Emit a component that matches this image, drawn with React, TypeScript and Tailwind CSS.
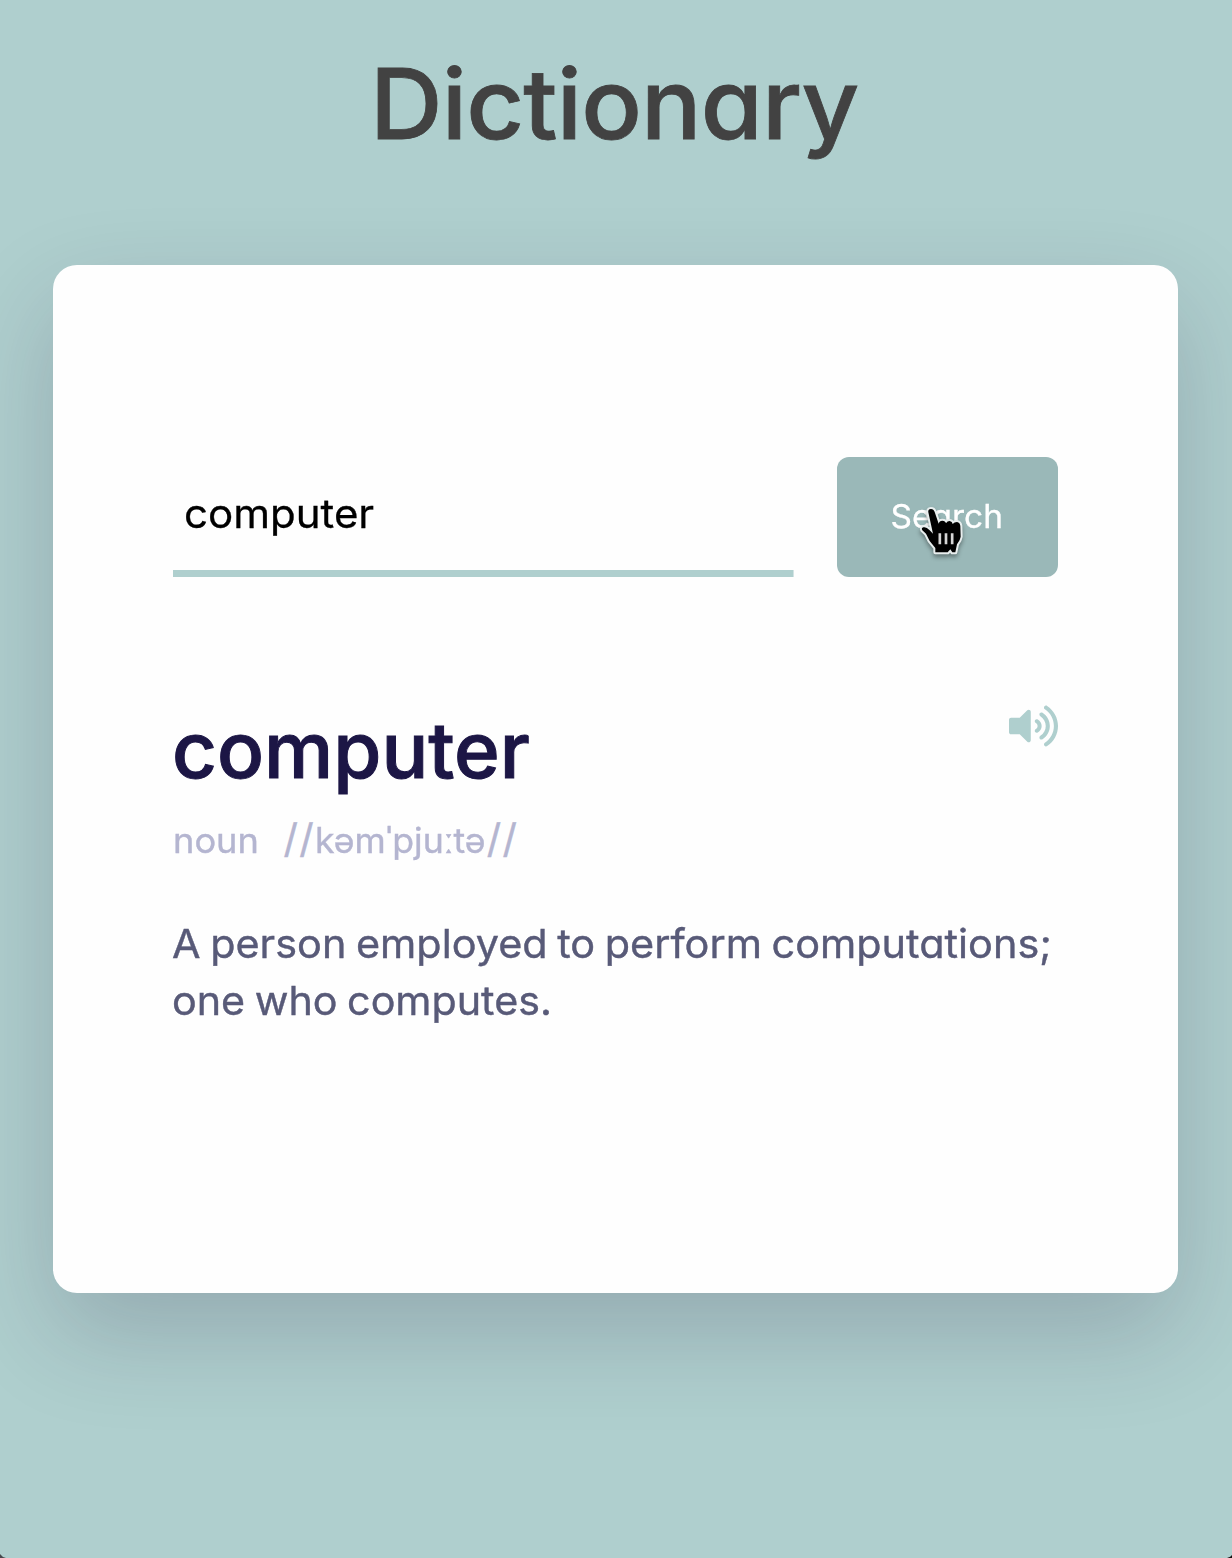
import { FaVolumeUp } from "react-icons/fa";

function HandCursor() {
  return (
    <svg
      className="pointer-events-none absolute left-[53px] top-[33px] h-[80px] w-[120px] drop-shadow-[0_3px_2px_rgba(0,0,0,0.35)]"
      viewBox="0 0 360 240"
    >
      <path
        d="M115 67Q113 58 123 57Q131 57 134 66L146 101Q148 92 157 92Q166 92 168 100Q172 93 179 93Q187 94 188 102Q193 96 201 96Q210 98 211 108L212 140Q211 150 201 163L196 187H187L181 178L173 187H136V174L119 153L108 131L97 121Q93 114 100 112Q108 109 119 121L129 131Z"
        fill="#000"
        stroke="#e8eeee"
        strokeWidth="12"
        strokeLinejoin="round"
        paintOrder="stroke"
      />
      <path d="M149.500 130V163M168 130V163M186.500 130V163" stroke="#d5d5d5" strokeWidth="8" />
    </svg>
  );
}

export default function App() {
  return (
    <main className="relative flex h-[1558px] w-full flex-col items-center overflow-hidden bg-[#afcfce] font-['Inter',sans-serif] [font-feature-settings:'cv11']">
      <h1 className="mr-[4px] mt-[32px] h-[144px] scale-x-[1.025] whitespace-nowrap text-[98px] font-medium leading-[144px] tracking-[-0.8px] text-[#424242] [-webkit-text-stroke:0.8px_#424242]">
        Dictionary
      </h1>
      <section className="mr-[2px] mt-[89px] h-[1028px] w-[1125px] rounded-[24px] bg-[#fefefe] px-[120px] pt-[192px] shadow-[0_40px_100px_rgba(38,25,58,0.2)]">
        <div className="flex justify-between">
          <div className="w-[620px]">
            <input
              className="h-[120px] w-[590.5px] origin-left scale-x-[1.05] border-b-[7px] border-[#afcfce] bg-transparent px-[10.5px] pb-px text-[40px] text-black outline-none [-webkit-text-stroke:0.3px_#000]"
              defaultValue="computer"
            />
          </div>
          <button className="relative h-[120px] w-[221px] rounded-[12px] bg-[#9ab8b8] text-[32px] text-white">
            <span className="inline-block scale-x-[1.045] [-webkit-text-stroke:0.3px_#fff]">Search</span>
            <HandCursor />
          </button>
        </div>
        <div className="mt-[124px] flex items-start justify-between">
          <h2 className="-ml-px h-[98px] origin-left scale-x-[1.012] text-[77px] font-medium leading-[98px] text-[#1c1645] [-webkit-text-stroke:1px_#1c1645]">
            computer
          </h2>
          <FaVolumeUp className="mt-[3px] h-[44px] w-[49px] text-[#afcfce]" />
        </div>
        <div className="mt-[16px] flex h-[50px] gap-[28px] text-[35px] leading-[50px] text-[#b4b5d0] [-webkit-text-stroke:0.4px_#b4b5d0]">
          <span className="inline-block origin-left scale-x-[1.035]">noun</span>
          <span className="flex whitespace-nowrap">
            <span className="-mt-px text-[40px] tracking-[1.2px]">//</span>
            <span className="w-[172px]">
              <span className="inline-block origin-left scale-x-[1.02]">kəmˈpjuːtə</span>
            </span>
            <span className="-mt-px text-[40px] tracking-[1.2px]">//</span>
          </span>
        </div>
        <p className="-ml-px mt-[50px] whitespace-nowrap text-[40px] leading-[57px] text-[#585a78] [-webkit-text-stroke:0.4px_#585a78] [word-spacing:-2px]">
          <span className="inline-block origin-left scale-x-[1.035]">
            A person employed to perform computations;
          </span>
          <br />
          <span className="inline-block origin-left scale-x-[1.031]">one who computes.</span>
        </p>
      </section>
      <svg className="absolute bottom-0 left-0 h-[4px] w-[6px]" viewBox="0 0 6 4">
        <path d="M0 0Q2 3 6 4H0Z" fill="#46494d" />
      </svg>
      <svg className="absolute bottom-0 right-0 h-[3px] w-[5px]" viewBox="0 0 5 3">
        <path d="M5 0Q4 2 0 3H5Z" fill="#111" />
      </svg>
    </main>
  );
}
